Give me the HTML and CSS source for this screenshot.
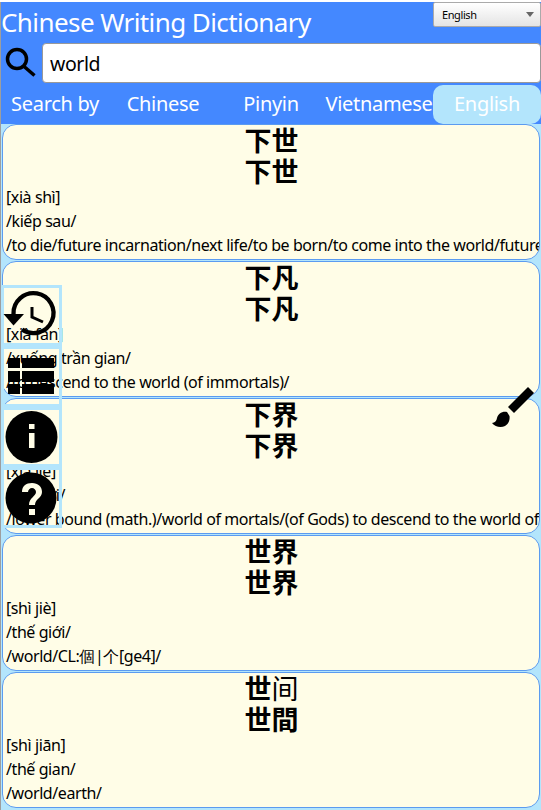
FILE: index.html
```html
<!DOCTYPE html>
<html lang="en">
<head>
<meta charset="utf-8">
<title>Chinese Writing Dictionary</title>
<link rel="stylesheet" href="styles.css">
</head>
<body>
<div class="app">
  <header class="header">
    <div class="title-row">
      <h1 class="title">Chinese Writing Dictionary</h1>
      <div class="lang-select"><span>English</span><i class="caret"></i></div>
    </div>
    <div class="search-row">
      <svg class="search-icon" viewBox="0 0 32 32" width="32" height="32"><circle cx="12" cy="12" r="9.500" fill="none" stroke="#000" stroke-width="3.500"/><path d="M18.500 19 L29.500 28.500" stroke="#000" stroke-width="3.500" fill="none"/></svg>
      <div class="search-box">world</div>
    </div>
    <nav class="tabs">
      <span class="tab">Search by</span>
      <span class="tab">Chinese</span>
      <span class="tab">Pinyin</span>
      <span class="tab">Vietnamese</span>
      <span class="tab tab-active">English</span>
    </nav>
  </header>
  <main class="list">
    <article class="card">
      <div class="han">下世</div><div class="han">下世</div>
      <div class="line">[xià shì]</div><div class="line">/kiếp sau/</div>
      <div class="line">/to die/future incarnation/next life/to be born/to come into the world/future generations/</div>
    </article>
    <article class="card">
      <div class="han">下凡</div><div class="han">下凡</div>
      <div class="line">[xià fán]</div><div class="line">/xuống trần gian/</div>
      <div class="line">/to descend to the world (of immortals)/</div>
    </article>
    <article class="card">
      <div class="han">下界</div><div class="han">下界</div>
      <div class="line">[xià jiè]</div><div class="line">/hạ giới/</div>
      <div class="line">/lower bound (math.)/world of mortals/(of Gods) to descend to the world of mortals/</div>
    </article>
    <article class="card">
      <div class="han">世界</div><div class="han">世界</div>
      <div class="line">[shì jiè]</div><div class="line">/thế giới/</div>
      <div class="line">/world/CL:個|个[ge4]/</div>
    </article>
    <article class="card">
      <div class="han">世<span class="light">间</span></div><div class="han">世間</div>
      <div class="line">[shì jiān]</div><div class="line">/thế gian/</div>
      <div class="line">/world/earth/</div>
    </article>
  </main>
  <div class="fabs">
    <div class="fab">
      <svg viewBox="0 0 55 55" width="55" height="55"><path d="M9.500 26 A20 20 0 1 1 18 41.500" fill="none" stroke="#000" stroke-width="4.300"/><path d="M-0.500 26 H20 L9.500 37.500 Z" fill="#000"/><path d="M28 19 V29 L39 34" fill="none" stroke="#000" stroke-width="3"/></svg>
    </div>
    <div class="fab">
      <svg viewBox="0 0 55 55" width="55" height="55"><path d="M4 9H16V19H4ZM18 9H50V19H18ZM4 22H16V33H4ZM18 22H50V33H18ZM4 35H16V45H4ZM18 35H50V45H18Z" fill="#000"/></svg>
    </div>
    <div class="fab">
      <svg viewBox="0 0 55 55" width="55" height="55"><circle cx="27.500" cy="27" r="26" fill="#000"/><path d="M25 14h5.500v5h-5.500zM25 23h5.500v15h-5.500z" fill="#fffde7"/></svg>
    </div>
    <div class="fab">
      <svg viewBox="0 0 55 55" width="55" height="55"><circle cx="27" cy="28" r="25.500" fill="#000"/><path d="M18 22c0-6 4-9 10-9s10 3.500 10 9c0 6-7 7-7 13h-6c0-7 7-9 7-13c0-2-2-4-4-4s-4 2-4 4z" fill="#fffde7"/><path d="M25 39h6v6h-6z" fill="#fffde7"/></svg>
    </div>
  </div>
  <svg class="brush" viewBox="0 0 46 46" width="46" height="46"><path d="M38 2 L44 8 L24 28 L18 22 Z" fill="#000"/><path d="M17 27 C12 26 8 29 7 33 C6.500 36 5 37.500 2 38 C5 42 11 43 15 41 C19 39 20 34 19.500 31 Z" fill="#000"/></svg>
</div>
</body>
</html>
```
FILE: styles.css
```css
* { box-sizing: border-box; }
html, body { margin: 0; padding: 0; height: 810px; overflow: hidden; }
body { background: #fff; font-family: "Noto Sans", "Noto Sans CJK SC", sans-serif; }
.app { position: relative; width: 541px; height: 810px; margin-top: 2px; background: #b3e5fc; overflow: hidden; border-left: 1px solid #9e9e9e; }
.header { background: #4488ff; height: 122px; color: #fff; }
.title-row { display: flex; justify-content: space-between; height: 39px; }
.title { margin: 0; font-family: "Noto Sans", sans-serif; font-weight: 400; font-size: 26px; letter-spacing: -0.58px; line-height: 40px; white-space: nowrap; }
.lang-select { width: 108px; height: 25px; border: 1px solid #aaa; border-radius: 2px; background: linear-gradient(#fff, #e4e4e4); color: #000; font: 11px/20px "Noto Sans", sans-serif; letter-spacing: -0.4px; padding: 0 6px 0 8px; display: flex; justify-content: space-between; align-items: center; }
.caret { width: 0; height: 0; border-left: 4px solid transparent; border-right: 4px solid transparent; border-top: 5px solid #666; }
.search-row { display: flex; align-items: center; height: 44px; padding-left: 4px; gap: 5px; }
.search-icon { flex: none; }
.search-box { width: 499px; height: 40px; background: #fff; border: 1px solid #999; border-radius: 4px; color: #000; font: 19.5px/40px "Noto Sans", sans-serif; letter-spacing: -0.4px; padding-left: 7px; }
.tabs { display: grid; grid-template-columns: repeat(5, 108px); height: 39px; font: 20px/37px "Noto Sans", sans-serif; letter-spacing: -0.3px; }
.tab { display: block; text-align: center; white-space: nowrap; }
.tab-active { background: #b3e5fc; border-radius: 10px; }
.list { display: flex; flex-direction: column; gap: 1px; padding: 0 0 0 1px; }
.card { width: 538px; height: 136px; flex: none; background: #fffde7; border: 1px solid #5b9bf0; border-radius: 14px; overflow: hidden; color: #000; }
.han { height: 31px; font: 700 27px/30px "Noto Sans CJK SC", sans-serif; text-align: center; padding-left: 1px; }
.han .light { font-weight: 400; }
.line { height: 24px; font: 16px/20px "Noto Sans", sans-serif; letter-spacing: -0.42px; padding-left: 3px; white-space: nowrap; }
.fabs { position: absolute; left: 0; top: 283px; width: 61px; display: flex; flex-direction: column; }
.fab { height: 60.75px; border: 3px solid #b3e5fc; display: flex; align-items: flex-start; justify-content: flex-start; }
.fab svg { flex: none; overflow: visible; }
.brush { position: absolute; left: 489px; top: 383px; }
```
